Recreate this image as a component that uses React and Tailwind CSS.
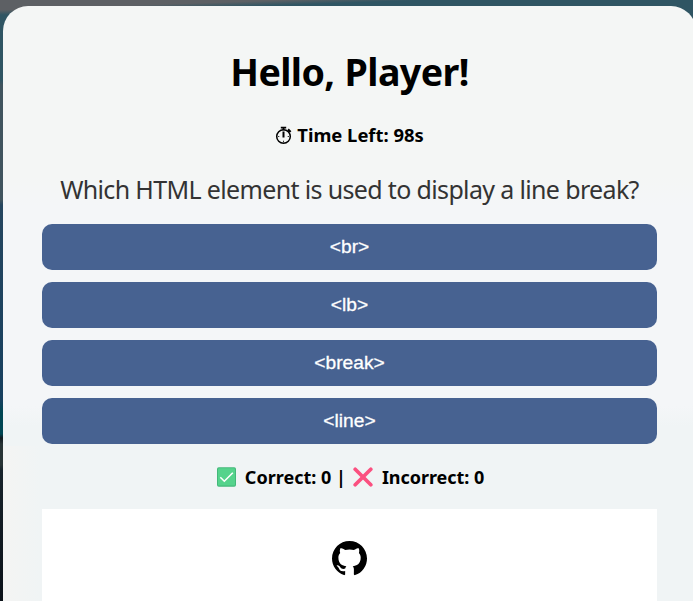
const answers = ['<br>', '<lb>', '<break>', '<line>'];

function Stopwatch() {
  return (
    <svg className="h-[19px] w-[17px] shrink-0" viewBox="0 0 17 19" fill="none" stroke="#000">
      <circle cx="8.5" cy="10.5" r="6.8" strokeWidth="1.5" />
      <path d="M8.5 11.5V5.5" strokeWidth="2" />
      <path d="M5.8 1.7h5.4M8.5 1.7v2.5" strokeWidth="1.8" />
      <path d="M13 3.4l2.6 2.6" strokeWidth="2.2" />
      <path d="M8.5 14.7v1.6M3 10.5h1.3M12.7 10.5H14" strokeWidth="0.8" />
    </svg>
  );
}

function CheckBadge() {
  return (
    <svg className="h-5 w-[19px] shrink-0" viewBox="0 0 19 20" fill="none">
      <rect x="0" y="0.3" width="19" height="19.4" rx="1.8" fill="#43b87a" />
      <rect x="1" y="1.2" width="17" height="17.4" rx="1.2" fill="#55d38c" />
      <path d="M3.3 10.3l4 3.9L15.8 5.8" stroke="#fff" strokeWidth="1.6" />
    </svg>
  );
}

function CrossMark() {
  return (
    <svg className="h-5 w-5 shrink-0" viewBox="0 0 20 20" fill="none">
      <path d="M2.2 2.2l15.6 15.6M17.8 2.2L2.2 17.8" stroke="#fb5080" strokeWidth="3.7" strokeLinecap="round" />
    </svg>
  );
}

function GithubMark() {
  return (
    <svg className="h-[35px] w-[35px]" viewBox="0 0 16 16" fill="#000">
      <path d="M8 0C3.58 0 0 3.58 0 8c0 3.54 2.29 6.53 5.47 7.59.4.07.55-.17.55-.38 0-.19-.01-.82-.01-1.49-2.01.37-2.53-.49-2.69-.94-.09-.23-.48-.94-.82-1.13-.28-.15-.68-.52-.01-.53.63-.01 1.08.58 1.23.82.72 1.21 1.87.87 2.33.66.07-.52.28-.87.51-1.07-1.78-.2-3.64-.89-3.64-3.95 0-.87.31-1.59.82-2.15-.08-.2-.36-1.02.08-2.12 0 0 .67-.21 2.2.82.64-.18 1.32-.27 2-.27s1.36.09 2 .27c1.53-1.04 2.2-.82 2.2-.82.44 1.1.16 1.92.08 2.12.51.56.82 1.27.82 2.15 0 3.07-1.87 3.75-3.65 3.95.29.25.54.73.54 1.48 0 1.07-.01 1.93-.01 2.2 0 .21.15.46.55.38A8.01 8.01 0 0 0 16 8c0-4.42-3.58-8-8-8z" />
    </svg>
  );
}

export default function App() {
  return (
    <div className="h-[601px] w-[693px] overflow-hidden bg-[linear-gradient(178deg,#5d6064_0px,#5d6064_10px,transparent_15px,transparent_100%),linear-gradient(180deg,#2f5563_0px,#2f5563_80px,#40545e_85px,#40545e_200px,#25465f_205px,#17405f_400px,#004653_412px,#004653_434px,#111a20_438px,#283335_444px,#283335_465px,#18232b_470px,#0b1119_601px)] pl-[3px] pt-[6px] font-['Noto_Sans','Open_Sans',sans-serif]">
      <main className="flex h-[700px] w-[693px] flex-col items-center rounded-[25px] bg-[linear-gradient(90deg,#f4f4f3_0px,#f4f4f300_38px),linear-gradient(180deg,#f4f6f5_0px,#f4f6f5_170px,#f4f6f8_200px,#f4f6f8_400px,#f0f4f5_420px,#f0f4f5_600px)] bg-[length:100%_200px,100%_100%] bg-[position:0_440px,0_0] bg-no-repeat px-[39px] text-black">
        <h1 className="mt-[40px] h-[52px] whitespace-nowrap text-[37.6px] font-bold leading-[52px] tracking-[-0.6px] [word-spacing:1px]">Hello, Player!</h1>
        <div className="mt-[24px] flex h-[26px] items-center gap-[5px] whitespace-nowrap text-[18.4px] font-bold leading-[26px]">
          <Stopwatch />
          <span>Time Left: 98s</span>
        </div>
        <p className="mt-[23px] h-[36px] whitespace-nowrap text-[25px] leading-[36px] tracking-[-0.65px] text-[#333]">Which HTML element is used to display a line break?</p>
        <div className="mt-[17px] flex w-full flex-col gap-3">
          {answers.map((answer) => (
            <button key={answer} className="h-[46px] w-full rounded-[10px] bg-[#476291] pb-px font-['Liberation_Sans',Arial,sans-serif] text-[19.2px] leading-none text-white [-webkit-text-stroke:0.3px_#fff]">
              {answer}
            </button>
          ))}
        </div>
        <div className="mt-[20px] flex h-[26px] items-center whitespace-nowrap pl-[2px] text-[18px] font-bold leading-[26px]">
          <CheckBadge />
          <span className="ml-[9px]">Correct: 0 |</span>
          <span className="ml-[7px] flex"><CrossMark /></span>
          <span className="ml-[9px] tracking-[-0.05px]">Incorrect: 0</span>
        </div>
        <footer className="mt-[19px] flex h-[180px] w-full justify-center bg-white pt-[32px]">
          <GithubMark />
        </footer>
      </main>
    </div>
  );
}
